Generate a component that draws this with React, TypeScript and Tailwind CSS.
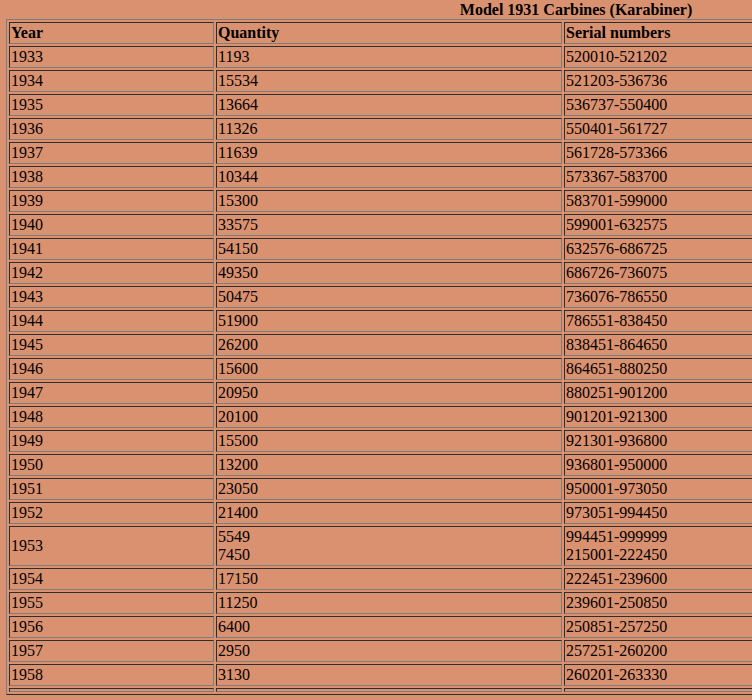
type Row = { year: string; qty: string[]; serials: string[] }

const rows: Row[] = [
  { year: '1933', qty: ['1193'], serials: ['520010-521202'] },
  { year: '1934', qty: ['15534'], serials: ['521203-536736'] },
  { year: '1935', qty: ['13664'], serials: ['536737-550400'] },
  { year: '1936', qty: ['11326'], serials: ['550401-561727'] },
  { year: '1937', qty: ['11639'], serials: ['561728-573366'] },
  { year: '1938', qty: ['10344'], serials: ['573367-583700'] },
  { year: '1939', qty: ['15300'], serials: ['583701-599000'] },
  { year: '1940', qty: ['33575'], serials: ['599001-632575'] },
  { year: '1941', qty: ['54150'], serials: ['632576-686725'] },
  { year: '1942', qty: ['49350'], serials: ['686726-736075'] },
  { year: '1943', qty: ['50475'], serials: ['736076-786550'] },
  { year: '1944', qty: ['51900'], serials: ['786551-838450'] },
  { year: '1945', qty: ['26200'], serials: ['838451-864650'] },
  { year: '1946', qty: ['15600'], serials: ['864651-880250'] },
  { year: '1947', qty: ['20950'], serials: ['880251-901200'] },
  { year: '1948', qty: ['20100'], serials: ['901201-921300'] },
  { year: '1949', qty: ['15500'], serials: ['921301-936800'] },
  { year: '1950', qty: ['13200'], serials: ['936801-950000'] },
  { year: '1951', qty: ['23050'], serials: ['950001-973050'] },
  { year: '1952', qty: ['21400'], serials: ['973051-994450'] },
  { year: '1953', qty: ['5549', '7450'], serials: ['994451-999999', '215001-222450'] },
  { year: '1954', qty: ['17150'], serials: ['222451-239600'] },
  { year: '1955', qty: ['11250'], serials: ['239601-250850'] },
  { year: '1956', qty: ['6400'], serials: ['250851-257250'] },
  { year: '1957', qty: ['2950'], serials: ['257251-260200'] },
  { year: '1958', qty: ['3130'], serials: ['260201-263330'] },
]

const cell =
  'p-[1px] align-middle border border-t-[#2e2e2e] border-l-[#2e2e2e] border-b-[#7d7d7d] border-r-[#7d7d7d]'

function Lines({ items }: { items: string[] }) {
  return (
    <>
      {items.map((t, i) => (
        <div key={i}>{t}</div>
      ))}
    </>
  )
}

export default function App() {
  return (
    <div
      className="w-[752px] min-h-[700px] overflow-hidden bg-[#da9170] text-black text-[16px] leading-[18px]"
      style={{ fontFamily: '"Liberation Serif", "Times New Roman", serif' }}
    >
      <div className="w-[1152px] h-[19px] pt-[1px] text-center font-bold">
        Model 1931 Carbines (Karabiner)
      </div>
      <div className="pl-[6px]">
        <table className="table-fixed w-[1140px] border-separate border-spacing-[2px] border border-t-[#7d7d7d] border-l-[#7d7d7d] border-b-[#2e2e2e] border-r-[#2e2e2e]">
          <colgroup>
            <col className="w-[205px]" />
            <col className="w-[346px]" />
            <col className="w-[579px]" />
          </colgroup>
          <tbody>
            <tr>
              <th className={`${cell} text-left font-bold`}>Year</th>
              <th className={`${cell} text-left font-bold`}>Quantity</th>
              <th className={`${cell} text-left font-bold`}>Serial numbers</th>
            </tr>
            {rows.map((r) => (
              <tr key={r.year}>
                <td className={cell}>{r.year}</td>
                <td className={cell}>
                  <Lines items={r.qty} />
                </td>
                <td className={cell}>
                  <Lines items={r.serials} />
                </td>
              </tr>
            ))}
            <tr className="h-[4px]">
              <td className={cell}></td>
              <td className={cell}></td>
              <td className={cell}></td>
            </tr>
          </tbody>
        </table>
      </div>
    </div>
  )
}
